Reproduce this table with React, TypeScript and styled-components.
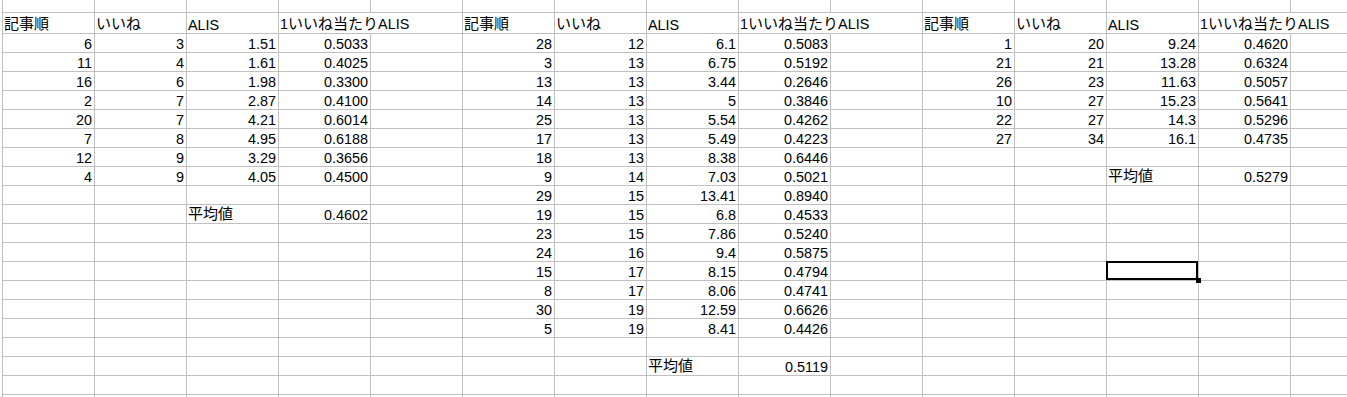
import React from "react";
import styled, { createGlobalStyle, css } from "styled-components";

const GlobalStyle = createGlobalStyle`
  html, body {
    margin: 0;
    padding: 0;
    background: #ffffff;
    overflow: hidden;
  }
  body {
    font-family: "Liberation Sans", "Noto Sans CJK JP", sans-serif;
  }
`;

const COLS = 15;
const ROW_HEIGHTS = [13, 21, ...Array(20).fill(19)];
const GRID = "#c0c0c0";

const Sheet = styled.div`
  display: grid;
  grid-template-columns: repeat(${COLS}, 92px);
  grid-template-rows: ${ROW_HEIGHTS.map((h) => `${h}px`).join(" ")};
  margin-left: 2px;
  border-left: 1px solid ${GRID};
  width: max-content;
`;

const Cell = styled.div<{ $num?: boolean; $spill?: boolean; $selected?: boolean }>`
  position: relative;
  box-sizing: border-box;
  border-right: 1px solid ${(p) => (p.$spill ? "transparent" : GRID)};
  border-bottom: 1px solid ${GRID};
  display: flex;
  align-items: flex-end;
  justify-content: ${(p) => (p.$num ? "flex-end" : "flex-start")};
  padding: 0 2px 0 1px;
  font-size: 14.4px;
  line-height: normal;
  color: #000000;
  white-space: nowrap;
  overflow: visible;
  z-index: ${(p) => (p.$spill ? 1 : 0)};
  ${(p) =>
    p.$selected &&
    css`
      z-index: 2;
      &::after {
        content: "";
        position: absolute;
        left: -1px;
        top: -1px;
        width: 92px;
        height: 19px;
        box-sizing: border-box;
        border: 2px solid #000000;
        pointer-events: none;
      }
      &::before {
        content: "";
        position: absolute;
        left: 89px;
        top: 16px;
        width: 5px;
        height: 5px;
        background: #000000;
        z-index: 3;
      }
    `}
`;

const CellText = styled.span`
  line-height: normal;
`;

const Jp = styled.span`
  font-family: "Noto Sans CJK JP", sans-serif;
  font-size: 15px;
`;

type Entry = { text: string; num?: boolean; spill?: boolean };

const HEADERS = ["記事順", "いいね", "ALIS", "1いいね当たりALIS"];

const TABLES: { col: number; rows: string[][]; avgRow: number; avg: string }[] = [
  {
    col: 0,
    rows: [
      ["6", "3", "1.51", "0.5033"],
      ["11", "4", "1.61", "0.4025"],
      ["16", "6", "1.98", "0.3300"],
      ["2", "7", "2.87", "0.4100"],
      ["20", "7", "4.21", "0.6014"],
      ["7", "8", "4.95", "0.6188"],
      ["12", "9", "3.29", "0.3656"],
      ["4", "9", "4.05", "0.4500"],
    ],
    avgRow: 11,
    avg: "0.4602",
  },
  {
    col: 5,
    rows: [
      ["28", "12", "6.1", "0.5083"],
      ["3", "13", "6.75", "0.5192"],
      ["13", "13", "3.44", "0.2646"],
      ["14", "13", "5", "0.3846"],
      ["25", "13", "5.54", "0.4262"],
      ["17", "13", "5.49", "0.4223"],
      ["18", "13", "8.38", "0.6446"],
      ["9", "14", "7.03", "0.5021"],
      ["29", "15", "13.41", "0.8940"],
      ["19", "15", "6.8", "0.4533"],
      ["23", "15", "7.86", "0.5240"],
      ["24", "16", "9.4", "0.5875"],
      ["15", "17", "8.15", "0.4794"],
      ["8", "17", "8.06", "0.4741"],
      ["30", "19", "12.59", "0.6626"],
      ["5", "19", "8.41", "0.4426"],
    ],
    avgRow: 19,
    avg: "0.5119",
  },
  {
    col: 10,
    rows: [
      ["1", "20", "9.24", "0.4620"],
      ["21", "21", "13.28", "0.6324"],
      ["26", "23", "11.63", "0.5057"],
      ["10", "27", "15.23", "0.5641"],
      ["22", "27", "14.3", "0.5296"],
      ["27", "34", "16.1", "0.4735"],
    ],
    avgRow: 9,
    avg: "0.5279",
  },
];

const SELECTED = { row: 14, col: 12 };

function buildGrid(): (Entry | null)[][] {
  const grid: (Entry | null)[][] = ROW_HEIGHTS.map(() => Array(COLS).fill(null));
  TABLES.forEach((t) => {
    HEADERS.forEach((h, i) => {
      grid[1][t.col + i] = { text: h, spill: i === 3 };
    });
    t.rows.forEach((r, ri) => {
      r.forEach((v, ci) => {
        grid[2 + ri][t.col + ci] = { text: v, num: true };
      });
    });
    grid[t.avgRow][t.col + 2] = { text: "平均値" };
    grid[t.avgRow][t.col + 3] = { text: t.avg, num: true };
  });
  return grid;
}

const CJK = /([\u3040-\u30ff\u4e00-\u9fff]+)/;

function renderText(text: string) {
  return text
    .split(CJK)
    .filter((part) => part.length > 0)
    .map((part, i) => (CJK.test(part) ? <Jp key={i}>{part}</Jp> : <React.Fragment key={i}>{part}</React.Fragment>));
}

export default function App() {
  const grid = buildGrid();
  return (
    <>
      <GlobalStyle />
      <Sheet>
        {grid.map((row, ri) =>
          row.map((cell, ci) => (
            <Cell
              key={`${ri}-${ci}`}
              $num={cell?.num}
              $spill={cell?.spill}
              $selected={ri === SELECTED.row && ci === SELECTED.col}
            >
              {cell ? <CellText>{renderText(cell.text)}</CellText> : null}
            </Cell>
          ))
        )}
      </Sheet>
    </>
  );
}
